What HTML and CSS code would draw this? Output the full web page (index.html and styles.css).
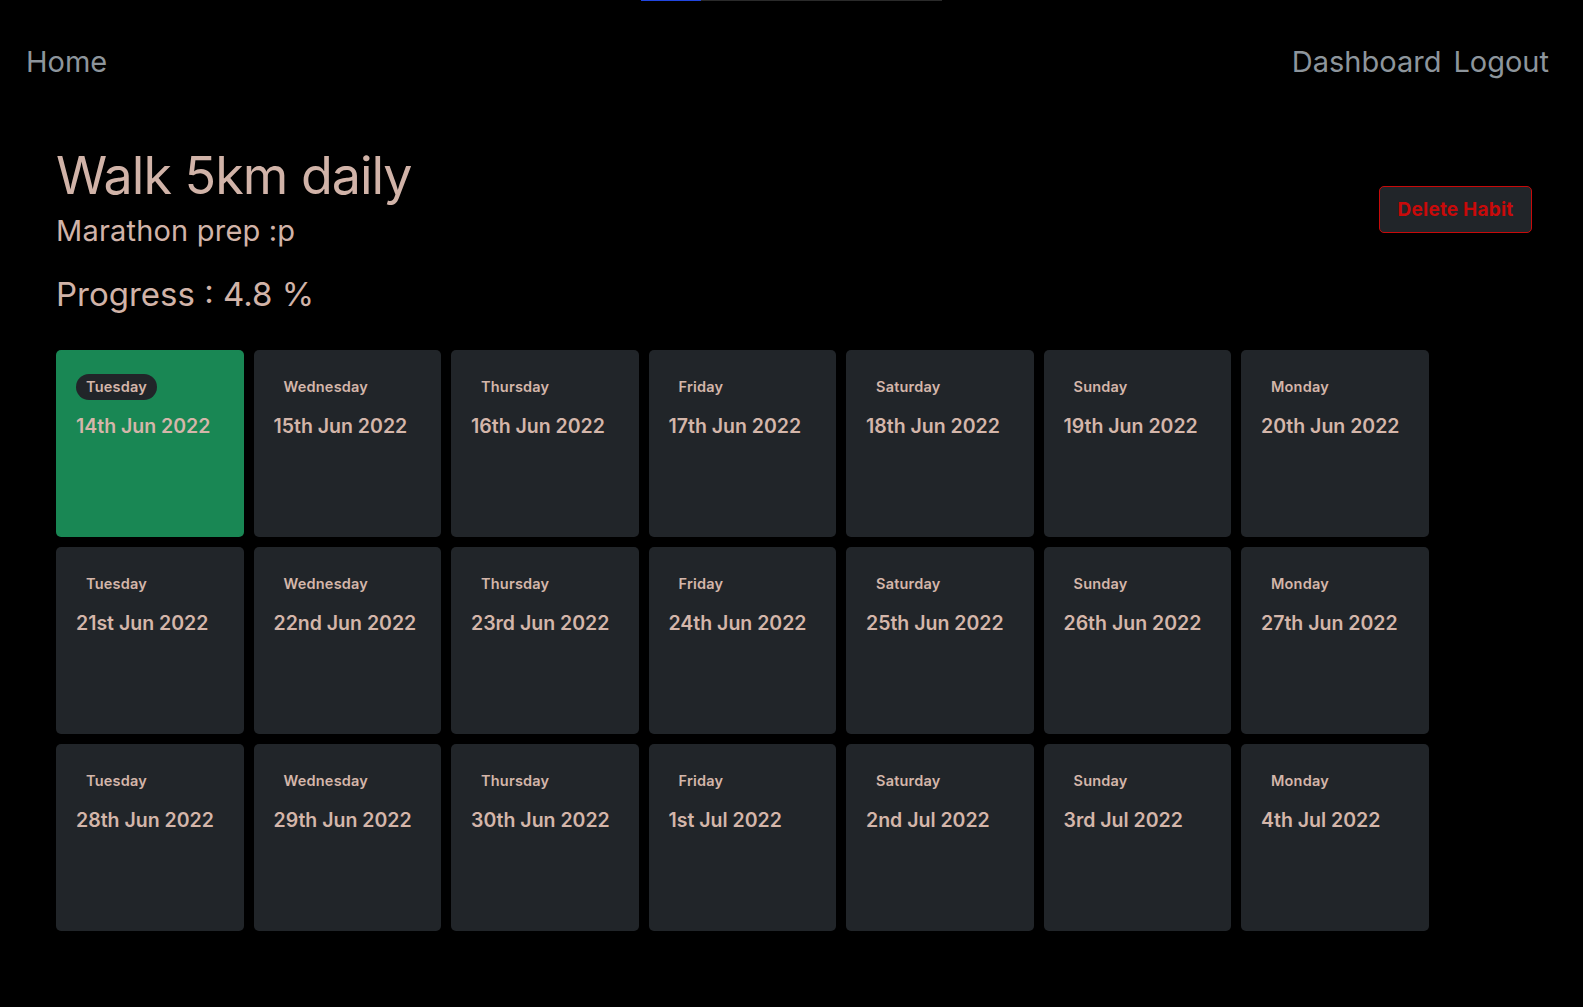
FILE: index.html
```html
<!DOCTYPE html>
<html lang="en">
<head>
    <meta charset="UTF-8">
    <meta name="viewport" content="width=device-width, initial-scale=1.0">
    <title>Habit</title>
    <link rel="stylesheet" href="styles.css">
</head>
<body>
    <div class="loader"><div class="loader-fill"></div></div>
    <nav class="navbar">
        <a href="#" class="nav-link">Home</a>
        <div class="nav-right">
            <a href="#" class="nav-link">Dashboard</a>
            <a href="#" class="nav-link">Logout</a>
        </div>
    </nav>
    <main class="habit">
        <div class="habit-head">
            <div>
                <h1 class="habit-title">Walk 5km daily</h1>
                <p class="habit-desc">Marathon prep :p</p>
            </div>
            <button type="button" class="btn-delete">Delete Habit</button>
        </div>
        <h2 class="progress">Progress : 4.8 %</h2>

        <div class="days">
            <div class="day done"><span class="day-name today">Tuesday</span><div class="day-date">14th Jun 2022</div></div>
            <div class="day"><span class="day-name">Wednesday</span><div class="day-date">15th Jun 2022</div></div>
            <div class="day"><span class="day-name">Thursday</span><div class="day-date">16th Jun 2022</div></div>
            <div class="day"><span class="day-name">Friday</span><div class="day-date">17th Jun 2022</div></div>
            <div class="day"><span class="day-name">Saturday</span><div class="day-date">18th Jun 2022</div></div>
            <div class="day"><span class="day-name">Sunday</span><div class="day-date">19th Jun 2022</div></div>
            <div class="day"><span class="day-name">Monday</span><div class="day-date">20th Jun 2022</div></div>

            <div class="day"><span class="day-name">Tuesday</span><div class="day-date">21st Jun 2022</div></div>
            <div class="day"><span class="day-name">Wednesday</span><div class="day-date">22nd Jun 2022</div></div>
            <div class="day"><span class="day-name">Thursday</span><div class="day-date">23rd Jun 2022</div></div>
            <div class="day"><span class="day-name">Friday</span><div class="day-date">24th Jun 2022</div></div>
            <div class="day"><span class="day-name">Saturday</span><div class="day-date">25th Jun 2022</div></div>
            <div class="day"><span class="day-name">Sunday</span><div class="day-date">26th Jun 2022</div></div>
            <div class="day"><span class="day-name">Monday</span><div class="day-date">27th Jun 2022</div></div>

            <div class="day"><span class="day-name">Tuesday</span><div class="day-date">28th Jun 2022</div></div>
            <div class="day"><span class="day-name">Wednesday</span><div class="day-date">29th Jun 2022</div></div>
            <div class="day"><span class="day-name">Thursday</span><div class="day-date">30th Jun 2022</div></div>
            <div class="day"><span class="day-name">Friday</span><div class="day-date">1st Jul 2022</div></div>
            <div class="day"><span class="day-name">Saturday</span><div class="day-date">2nd Jul 2022</div></div>
            <div class="day"><span class="day-name">Sunday</span><div class="day-date">3rd Jul 2022</div></div>
            <div class="day"><span class="day-name">Monday</span><div class="day-date">4th Jul 2022</div></div>
        </div>
    </main>
</body>
</html>
```

FILE: styles.css
```css
* {
    padding: 0;
    margin: 0;
    box-sizing: border-box;
}

body {
    background: #000;
    font-family: "Inter", "Liberation Sans", sans-serif;
    color: #d1b3a8;
}

/* top loading bar */
.loader {
    width: 301px;
    height: 1px;
    margin: 0 auto;
    background: #2a2a2a;
}

.loader-fill {
    width: 20%;
    height: 100%;
    background: #2146e0;
}

.navbar {
    display: flex;
    justify-content: space-between;
    align-items: center;
    padding: 43px 34px 0 26px;
}

.nav-right {
    display: flex;
    gap: 12px;
}

.nav-link {
    color: #8d959c;
    text-decoration: none;
    font-size: 29px;
    line-height: 36px;
    letter-spacing: 0;
}

.habit {
    padding: 65px 51px 60px 56px;
}

.habit-head {
    display: flex;
    justify-content: space-between;
    align-items: flex-start;
}

.habit-title {
    font-size: 52px;
    font-weight: 400;
    line-height: 62px;
    letter-spacing: -1px;
}

.habit-desc {
    margin-top: 7px;
    font-size: 29px;
    line-height: 34px;
    letter-spacing: 0.2px;
}

.btn-delete {
    margin-top: 41px;
    width: 153px;
    height: 47px;
    background: #212529;
    border: 1px solid #c80a0a;
    border-radius: 5px;
    color: #c80a0a;
    font-family: inherit;
    font-size: 19px;
    font-weight: 700;
    letter-spacing: 0.2px;
    cursor: pointer;
}

.progress {
    margin-top: 26px;
    font-size: 33px;
    font-weight: 400;
    line-height: 40px;
}

.days {
    margin-top: 36px;
    display: grid;
    grid-template-columns: repeat(7, 187.5px);
    grid-auto-rows: 187px;
    gap: 10px;
}

.day {
    background: #212529;
    border-radius: 5px;
    padding: 24px 20px;
    color: #d4b6aa;
}

.day.done {
    background: #198754;
}

.day-name {
    display: inline-block;
    padding: 0 10px;
    height: 26px;
    line-height: 26px;
    border-radius: 13px;
    font-size: 14.5px;
    font-weight: 600;
    letter-spacing: 0.2px;
}

.day-name.today {
    background: #212529;
}

.day-date {
    margin-top: 14px;
    font-size: 19.5px;
    font-weight: 600;
    line-height: 25px;
}
```
